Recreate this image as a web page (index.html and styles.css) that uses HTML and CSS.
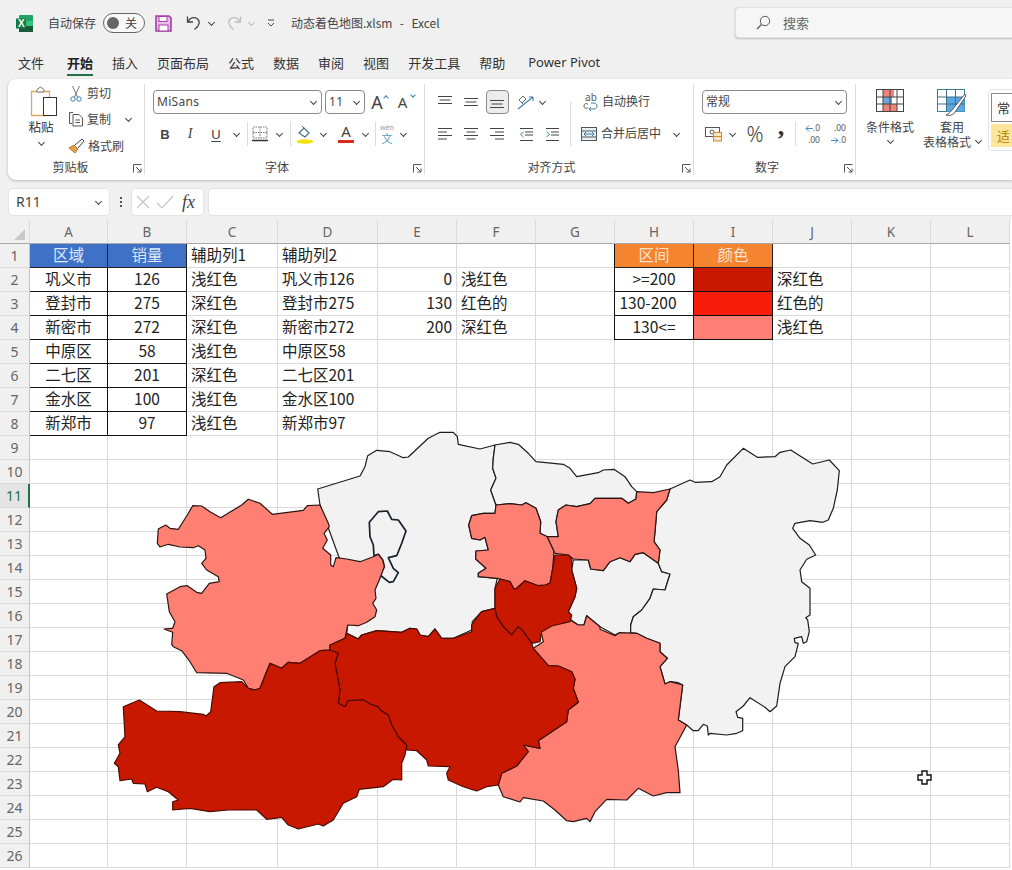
FILE: index.html
```html
<!DOCTYPE html>
<html lang="zh-CN">
<head>
<meta charset="utf-8">
<title>动态着色地图.xlsm - Excel</title>
<link rel="stylesheet" href="styles.css">
</head>
<body>
<div class="app">
  <svg class="defs" width="0" height="0">
    <symbol id="a-top" viewBox="0 0 16 16"><path d="M1 2.500h14M2.500 6h11M1 9.500h14"/></symbol>
    <symbol id="a-mid" viewBox="0 0 16 16"><path d="M1 4.500h14M2.500 8h11M1 11.500h14"/></symbol>
    <symbol id="a-bot" viewBox="0 0 16 16"><path d="M1 6.500h14M2.500 10h11M1 13.500h14"/></symbol>
    <symbol id="a-left" viewBox="0 0 16 16"><path d="M1 2.500h14M1 6h9M1 9.500h14M1 13h9"/></symbol>
    <symbol id="a-center" viewBox="0 0 16 16"><path d="M1 2.500h14M3.500 6h9M1 9.500h14M3.500 13h9"/></symbol>
    <symbol id="a-right" viewBox="0 0 16 16"><path d="M1 2.500h14M6 6h9M1 9.500h14M6 13h9"/></symbol>
    <symbol id="launch" viewBox="0 0 9 9"><path d="M.5 8.500v-8h8M3 3l5 5M8 4.500v3.500h-3.500" fill="none" stroke="#555"/></symbol>
  </svg>

  <header class="titlebar">
    <svg class="logo" width="17" height="17" viewBox="0 0 17 17"><rect x="3" width="14" height="17" rx="1" fill="#21a366"/><rect x="10" y="6" width="7" height="5" fill="#33c481"/><rect x="3" y="11" width="14" height="6" fill="#185c37"/><rect y="3.500" width="10" height="10" fill="#107c41"/><text x="2" y="12" class="logo-x">X</text></svg>
    <span class="autosave">自动保存</span>
    <span class="toggle"><i class="knob"></i><span>关</span></span>
    <svg class="save" width="17" height="17" viewBox="0 0 17 17"><path d="M1 1h13l2 2v13H1z" fill="#e9bfe6" stroke="#a43ea3" stroke-width="1.600"/><rect x="4" y="1.500" width="8" height="5" fill="#fff" stroke="#a43ea3"/><rect x="4" y="10" width="9" height="6" fill="#fff" stroke="#a43ea3"/></svg>
    <svg class="undo" width="16" height="16" viewBox="0 0 16 16"><path d="M1.500 1.500v5.500h5.500M1.700 6.800C4 3 8 1.500 11 3.500c3.500 2.500 3 7-2.500 11" fill="none" stroke="#444" stroke-width="1.300"/></svg>
    <i class="chev qat-c1"></i>
    <svg class="redo" width="16" height="16" viewBox="0 0 16 16"><path d="M14.500 1.500v5.500h-5.500M14.300 6.800C12 3 8 1.500 5 3.500c-3.500 2.500-3 7 2.500 11" fill="none" stroke="#bbb" stroke-width="1.300"/></svg>
    <i class="chev light qat-c2"></i>
    <svg class="qat" width="8" height="8" viewBox="0 0 8 8"><path d="M1 1h6M1 4l3 3 3-3" fill="none" stroke="#444"/></svg>
    <span class="doc">动态着色地图.xlsm  -  Excel</span>
    <div class="search">
      <svg width="15" height="15" viewBox="0 0 15 15"><circle cx="9" cy="6" r="4.700" fill="none" stroke="#555"/><path d="M5.500 9.500L1 14" stroke="#555" stroke-width="1.200"/></svg>
      <span>搜索</span>
    </div>
  </header>

  <nav class="tabs">
    <span>文件</span><span class="active">开始</span><span>插入</span><span>页面布局</span><span>公式</span><span>数据</span><span>审阅</span><span>视图</span><span>开发工具</span><span>帮助</span><span class="pp">Power Pivot</span>
  </nav>

  <section class="ribbon">
    <div class="group g-clip">
      <div class="body clip-body">
        <div class="paste">
          <svg width="28" height="32" viewBox="0 0 28 32"><path d="M1.500 5.500h18v24h-18z" fill="#fff" stroke="#d9a860" stroke-width="1.300"/><path d="M7 6V3.500l3.500-2.500 3.500 2.500V6z" fill="#fff" stroke="#777"/><rect x="13.500" y="11.500" width="13" height="18" fill="#fff" stroke="#333"/></svg>
          <span>粘贴</span>
          <i class="chev"></i>
        </div>
        <div class="clip-tools">
          <div class="ct"><svg width="16" height="17" viewBox="0 0 16 17"><path d="M4.500 1l5 11M11.500 1l-5 11" stroke="#777" fill="none"/><circle cx="5" cy="14" r="2.200" fill="none" stroke="#3a7fb5"/><circle cx="11" cy="14" r="2.200" fill="none" stroke="#3a7fb5"/></svg><span>剪切</span></div>
          <div class="ct"><svg width="16" height="16" viewBox="0 0 16 16"><path d="M5 1.500H1.500v11H4" fill="none" stroke="#555"/><path d="M5 3.500h6l3.500 3.500v8H5z" fill="#fff" stroke="#555"/><path d="M7.500 9h4.500M7.500 11.500h4.500" stroke="#555"/></svg><span>复制</span><i class="chev ct-chev"></i></div>
          <div class="ct"><svg width="17" height="16" viewBox="0 0 17 16"><path d="M1 10l5-3 4 4-3 4z" fill="#e6a24a" stroke="#b87a2a"/><path d="M7 7l7-6 2 2-6 7" fill="#fff" stroke="#444"/></svg><span>格式刷</span></div>
        </div>
      </div>
      <div class="label"><span>剪贴板</span><svg class="launch"><use href="#launch"/></svg></div>
    </div>

    <div class="group g-font">
      <div class="body">
        <div class="row">
          <div class="select w-font"><span>MiSans</span><i class="chev"></i></div>
          <i class="sp w3"></i>
          <div class="select w-size"><span>11</span><i class="chev"></i></div>
          <div class="tool w-26 big-a"><span>A</span><i class="up"></i></div>
          <div class="tool w-26 mid-a"><span>A</span><i class="down"></i></div>
        </div>
        <div class="row">
          <div class="tool w-24 gl bold">B</div>
          <div class="tool w-26 gl ital">I</div>
          <div class="tool w-26 gl und">U</div>
          <div class="tool w-14"><i class="chev"></i></div>
          <i class="sp w4"></i><i class="vsep"></i><i class="sp w4"></i>
          <div class="tool w-16"><svg width="16" height="16" viewBox="0 0 16 16"><path d="M1 1h14v11H1zM8 1v11M1 6.500h14" fill="none" stroke="#777" stroke-dasharray="1.500 1"/><path d="M0 14.500h16" stroke="#333" stroke-width="1.300"/></svg></div>
          <div class="tool w-22"><i class="chev"></i></div>
          <i class="vsep"></i><i class="sp w2"></i>
          <div class="tool w-24"><svg width="18" height="19" viewBox="0 0 18 19"><path d="M3 8l5-5 5 5-4 4z" fill="#fff" stroke="#3f6f85" stroke-width="1.200"/><path d="M6 1l2 2" stroke="#3f6f85"/><ellipse cx="9" cy="16.500" rx="8.500" ry="2.200" fill="#f4e300"/></svg></div>
          <div class="tool w-12"><i class="chev"></i></div>
          <i class="sp w8"></i>
          <div class="tool w-18 col-a"><span>A</span><i class="bar"></i></div>
          <div class="tool w-20"><i class="chev"></i></div>
          <i class="vsep"></i>
          <div class="tool w-22 wen"><span class="py">wén</span><span class="zi">文</span></div>
          <div class="tool w-10"><i class="chev"></i></div>
        </div>
      </div>
      <div class="label"><span>字体</span><svg class="launch"><use href="#launch"/></svg></div>
    </div>

    <div class="group g-align">
      <div class="body">
        <div class="row">
          <div class="tool w-26"><svg class="ln"><use href="#a-top"/></svg></div>
          <div class="tool w-26"><svg class="ln"><use href="#a-mid"/></svg></div>
          <div class="tool w-26 pressed"><svg class="ln"><use href="#a-bot"/></svg></div>
          <i class="sp w6"></i>
          <div class="tool w-20"><svg width="18" height="16" viewBox="0 0 18 16"><path d="M1 15L16 3M16 3h-4M16 3v4" fill="none" stroke="#3f7fa8" stroke-width="1.100"/><path d="M2 6l4-4 3 3-4 4zM7 11l-2-2" fill="none" stroke="#666"/></svg></div>
          <div class="tool w-12"><i class="chev"></i></div>
          <i class="sp w22"></i><i class="vsep tall"></i><i class="sp w12"></i>
          <div class="tool w-16 wrap-ic"><span class="ab">ab</span><svg width="16" height="10" viewBox="0 0 16 10"><path d="M8 1h3c4 0 4 6 0 6H6M8 5L6 7l2 2" fill="none" stroke="#3f7fa8"/><path d="M5 2.500C3 .5 1 2 1 4s2 3.500 4 1.500" fill="none" stroke="#555"/></svg></div>
          <span class="tx ml3">自动换行</span>
        </div>
        <div class="row">
          <div class="tool w-26"><svg class="ln"><use href="#a-left"/></svg></div>
          <div class="tool w-26"><svg class="ln"><use href="#a-center"/></svg></div>
          <div class="tool w-26"><svg class="ln"><use href="#a-right"/></svg></div>
          <i class="sp w3"></i>
          <div class="tool w-26"><svg width="15" height="15" viewBox="0 0 15 15"><path d="M1 1.500h13M6 5h8M6 8h8M1 13.500h13" stroke="#444" fill="none"/><path d="M4.500 5L1.500 7.500l3 2.500" stroke="#3f7fa8" fill="none"/></svg></div>
          <div class="tool w-26"><svg width="15" height="15" viewBox="0 0 15 15"><path d="M1 1.500h13M6 5h8M6 8h8M1 13.500h13" stroke="#444" fill="none"/><path d="M1.500 5l3 2.500-3 2.500" stroke="#3f7fa8" fill="none"/></svg></div>
          <i class="sp w5"></i><i class="vsep"></i><i class="sp w10"></i>
          <div class="tool w-16"><svg width="16" height="16" viewBox="0 0 16 16"><rect x=".5" y="1.500" width="15" height="13" fill="#e8f2f6" stroke="#555"/><path d="M.5 5h15M.5 11h15" stroke="#555"/><path d="M3 8h10M5 6l-2 2 2 2M11 6l2 2-2 2" stroke="#3f7fa8" fill="none"/></svg></div>
          <span class="tx ml4">合并后居中</span>
          <i class="sp w9"></i>
          <div class="tool w-12"><i class="chev"></i></div>
        </div>
      </div>
      <div class="label"><span>对齐方式</span><svg class="launch"><use href="#launch"/></svg></div>
    </div>

    <div class="group g-num">
      <div class="body">
        <div class="row">
          <div class="select w-num"><span class="cn">常规</span><i class="chev"></i></div>
        </div>
        <div class="row">
          <div class="tool w-24"><svg width="18" height="16" viewBox="0 0 18 16"><rect x=".5" y="1.500" width="14" height="9" fill="#fff" stroke="#555"/><circle cx="7" cy="6" r="2" fill="none" stroke="#555"/><rect x="8.500" y="6.500" width="8" height="8.500" fill="#fde3bf" stroke="#d6892e"/><path d="M8.500 10.500h8" stroke="#d6892e"/></svg></div>
          <div class="tool w-12"><i class="chev"></i></div>
          <i class="sp w5"></i>
          <div class="tool w-24 pct">%</div>
          <i class="sp w2"></i>
          <div class="tool w-24 cma">,</div>
          <i class="sp w2"></i><i class="vsep"></i><i class="sp w1"></i>
          <div class="tool w-26 dec"><span><svg class="dec-ar" width="8" height="7" viewBox="0 0 8 7"><path d="M8 3.500H1M4 .5l-3 3 3 3" fill="none" stroke="#3f8fc4"/></svg>.0</span><span>.00</span></div>
          <div class="tool w-26 dec"><span>.00</span><span><svg class="dec-ar" width="8" height="7" viewBox="0 0 8 7"><path d="M0 3.500h7M4 .5l3 3-3 3" fill="none" stroke="#3f8fc4"/></svg>.0</span></div>
        </div>
      </div>
      <div class="label"><span>数字</span><svg class="launch"><use href="#launch"/></svg></div>
    </div>

    <div class="g-style">
      <div class="big w-cf">
        <svg width="28" height="23" viewBox="0 0 28 23"><rect x=".5" y=".5" width="27" height="22" fill="#fff" stroke="#444"/><path d="M7 1h11v7H7z" fill="#f08378"/><path d="M7 8h9v7H7z" fill="#6fa6de"/><path d="M7 15h14v7H7z" fill="#f08378"/><path d="M7 .5v22M14 .5v22M21 .5v22M.5 8h27M.5 15h27" stroke="#444" fill="none"/></svg>
        <span>条件格式</span><i class="chev"></i>
      </div>
      <div class="big w-tf">
        <svg width="30" height="28" viewBox="0 0 30 28"><rect x=".5" y=".5" width="27" height="22" fill="#fff" stroke="#3f7f8f"/><rect x="9.500" y="8" width="18" height="14.500" fill="#5aa7e8"/><path d="M9.500 .5v22M18.500 .5v22M.5 8h27M.5 15h27" stroke="#3f6f7f" fill="none"/><path d="M28 5L15 21c-1 1-3 4-6 5 3 1 8 0 9-3L29 7z" fill="#fff" stroke="#555"/></svg>
        <span>套用</span><span class="l2">表格格式<i class="chev"></i></span>
      </div>
      <div class="cells">
        <div class="normal">常</div>
        <div class="good">适</div>
      </div>
    </div>
  </section>

  <div class="formula">
    <div class="namebox"><span>R11</span><i class="chev"></i></div>
    <div class="dots"><i></i><i></i><i></i></div>
    <div class="fxbox">
      <svg width="14" height="14" viewBox="0 0 14 14"><path d="M1 1l12 12M13 1L1 13" stroke="#c4c4c4" stroke-width="1.200"/></svg>
      <svg width="18" height="14" viewBox="0 0 18 14"><path d="M1 8l5 5L17 1" fill="none" stroke="#c4c4c4" stroke-width="1.200"/></svg>
      <span class="fx">fx</span>
    </div>
    <div class="finput"></div>
  </div>

  <div class="sheet">
    <table class="grid">
      <colgroup><col class="c-h"><col class="c-a"><col class="c-b"><col class="c-c"><col class="c-d"><col class="c-n"><col class="c-n"><col class="c-n"><col class="c-n"><col class="c-n"><col class="c-n"><col class="c-n"><col class="c-n"></colgroup>
      <tr class="heads"><th class="corner"><i></i></th><th>A</th><th>B</th><th>C</th><th>D</th><th>E</th><th>F</th><th>G</th><th>H</th><th>I</th><th>J</th><th>K</th><th>L</th></tr>
      <tr><th>1</th><td class="blue">区域</td><td class="blue">销量</td><td>辅助列1</td><td>辅助列2</td><td></td><td></td><td></td><td class="orange">区间</td><td class="orange">颜色</td><td></td><td></td><td></td></tr>
      <tr><th>2</th><td class="box">巩义市</td><td class="box">126</td><td>浅红色</td><td>巩义市126</td><td class="num">0</td><td>浅红色</td><td></td><td class="box">&gt;=200</td><td class="box deep"></td><td>深红色</td><td></td><td></td></tr>
      <tr><th>3</th><td class="box">登封市</td><td class="box">275</td><td>深红色</td><td>登封市275</td><td class="num">130</td><td>红色的</td><td></td><td class="box tight">130-200</td><td class="box red"></td><td>红色的</td><td></td><td></td></tr>
      <tr><th>4</th><td class="box">新密市</td><td class="box">272</td><td>深红色</td><td>新密市272</td><td class="num">200</td><td>深红色</td><td></td><td class="box">130&lt;=</td><td class="box pale"></td><td>浅红色</td><td></td><td></td></tr>
      <tr><th>5</th><td class="box">中原区</td><td class="box">58</td><td>浅红色</td><td>中原区58</td><td></td><td></td><td></td><td></td><td></td><td></td><td></td><td></td></tr>
      <tr><th>6</th><td class="box">二七区</td><td class="box">201</td><td>深红色</td><td>二七区201</td><td></td><td></td><td></td><td></td><td></td><td></td><td></td><td></td></tr>
      <tr><th>7</th><td class="box">金水区</td><td class="box">100</td><td>浅红色</td><td>金水区100</td><td></td><td></td><td></td><td></td><td></td><td></td><td></td><td></td></tr>
      <tr><th>8</th><td class="box">新郑市</td><td class="box">97</td><td>浅红色</td><td>新郑市97</td><td></td><td></td><td></td><td></td><td></td><td></td><td></td><td></td></tr>
      <tr><th>9</th><td></td><td></td><td></td><td></td><td></td><td></td><td></td><td></td><td></td><td></td><td></td><td></td></tr>
      <tr><th>10</th><td></td><td></td><td></td><td></td><td></td><td></td><td></td><td></td><td></td><td></td><td></td><td></td></tr>
      <tr><th class="sel">11</th><td></td><td></td><td></td><td></td><td></td><td></td><td></td><td></td><td></td><td></td><td></td><td></td></tr>
      <tr><th>12</th><td></td><td></td><td></td><td></td><td></td><td></td><td></td><td></td><td></td><td></td><td></td><td></td></tr>
      <tr><th>13</th><td></td><td></td><td></td><td></td><td></td><td></td><td></td><td></td><td></td><td></td><td></td><td></td></tr>
      <tr><th>14</th><td></td><td></td><td></td><td></td><td></td><td></td><td></td><td></td><td></td><td></td><td></td><td></td></tr>
      <tr><th>15</th><td></td><td></td><td></td><td></td><td></td><td></td><td></td><td></td><td></td><td></td><td></td><td></td></tr>
      <tr><th>16</th><td></td><td></td><td></td><td></td><td></td><td></td><td></td><td></td><td></td><td></td><td></td><td></td></tr>
      <tr><th>17</th><td></td><td></td><td></td><td></td><td></td><td></td><td></td><td></td><td></td><td></td><td></td><td></td></tr>
      <tr><th>18</th><td></td><td></td><td></td><td></td><td></td><td></td><td></td><td></td><td></td><td></td><td></td><td></td></tr>
      <tr><th>19</th><td></td><td></td><td></td><td></td><td></td><td></td><td></td><td></td><td></td><td></td><td></td><td></td></tr>
      <tr><th>20</th><td></td><td></td><td></td><td></td><td></td><td></td><td></td><td></td><td></td><td></td><td></td><td></td></tr>
      <tr><th>21</th><td></td><td></td><td></td><td></td><td></td><td></td><td></td><td></td><td></td><td></td><td></td><td></td></tr>
      <tr><th>22</th><td></td><td></td><td></td><td></td><td></td><td></td><td></td><td></td><td></td><td></td><td></td><td></td></tr>
      <tr><th>23</th><td></td><td></td><td></td><td></td><td></td><td></td><td></td><td></td><td></td><td></td><td></td><td></td></tr>
      <tr><th>24</th><td></td><td></td><td></td><td></td><td></td><td></td><td></td><td></td><td></td><td></td><td></td><td></td></tr>
      <tr><th>25</th><td></td><td></td><td></td><td></td><td></td><td></td><td></td><td></td><td></td><td></td><td></td><td></td></tr>
      <tr><th>26</th><td></td><td></td><td></td><td></td><td></td><td></td><td></td><td></td><td></td><td></td><td></td><td></td></tr>
    </table>

    <svg class="map" width="1012" height="650" viewBox="0 220 1012 650">
      <g class="gray">
        <polygon points="317.700,489 360,476 365,466.700 367.700,455.700 376.700,450.300 390,451.700 403.300,457.700 408.300,457 428.300,438.300 440,432.300 453.300,432.300 457.300,436.700 458.300,444.300 480,449 495,445 493.300,458.300 492.700,468.300 496,478.300 490.700,490 496,505 495,513.300 483.300,513.300 471.700,515.700 468.700,525 471.700,538.300 480,540 485,537.300 488.300,550 476,551 475.700,559 486,568.300 478.300,573.300 478.300,576.700 497.300,578.300 495,588.300 495,608.300 481.700,611.700 472.300,621.700 471.700,630 453.300,638.300 441.700,638.300 435,629 428.300,636.700 420,635 416.700,629 410,628.300 401.700,632.300 376.700,630.700 361.700,635 358.300,639 346.700,633.300 347.700,625 340,560 320,505"/>
        <polygon class="enclave" points="369.300,522.300 378.300,511.700 387.300,511 391.700,519.300 398.300,520 406,531 401.700,543.300 396.700,555.700 388.300,557.700 393.300,568.300 398.300,572.700 393.300,581.700 389.300,582.300 380,575 384.300,566.700 382.700,560 378.300,554.300 374,555.700 373.300,545 370,536.700"/>
        <polygon points="495,445 510,442.300 518.300,444.300 528.300,453.300 536,461.700 563.300,464.300 570,468.300 576.700,476.700 598.300,472.700 603.300,470 614,469.300 625,476.700 631.700,486.700 636.700,491.700 636,499 628.300,503.300 621.700,498.300 595,498.300 590,503.700 576.700,506.700 566,505 558.300,510 556,521.700 558.300,536.700 547.300,536.700 540,533.300 540.700,521.700 536,508.300 526,502.700 521.700,505 510,503.700 496,505 490.700,490 496,478.300 492.700,468.300 493.300,458.300"/>
        <polygon points="573.300,560 588.300,560 590.700,569 603.300,570.700 610,561.700 620,557.700 630,561.700 635,554.300 643.300,552.700 658.300,563.300 661.700,571.700 670,574 665,590 653.300,589 650,598.300 641.700,610 633.300,616.700 630.700,625 630.700,633 618.300,633.300 615,635 600,626.700 586.700,615.700 584,625 578.300,625 571,620 568.300,611.700 575,596.700 576.700,588.300 571.700,570"/>
        <polygon points="670,489 690,480 695,482.300 711.700,481.700 720,476.700 726.700,465 743.300,448.300 757.300,457.300 775,456.700 780,452.300 790.700,450 812.700,464 829.300,460 839.300,470.700 837.300,490 833.300,508.300 828.300,520 822.700,522.300 810,520.700 795,523.300 792.700,528.300 800,538.300 809.300,545 815.700,555 806.700,559.300 800,570 801.700,581.700 810,588.300 810,615 805.700,617.700 807.700,620 809.300,631.700 806.700,641.700 803.300,643.300 801.700,636.700 794.300,638.300 795,642.700 798.300,643.300 795,656.700 785,666.700 780,683.300 776.700,706 770,711.700 765,707.300 750,697.700 743.300,706 736,711.700 737.700,717.300 742.700,718.300 742.700,730.700 736.700,733.300 726.700,735 710,733.300 708.300,735 707.300,726 703.300,724.300 698.300,730.700 693.300,730.700 686.700,725 678.300,720 682.700,685 678.300,682.700 670,681.700 665,684 660,666.700 667.300,658.300 660,651.700 660,643.300 646.700,638.300 636.700,633.300 630.700,632.700 630.700,625 633.300,616.700 641.700,610 650,598.300 653.300,589 665,590 670,574 661.700,571.700 658.300,563.300 660,550 654,541.700 655,531.700 656.700,511.700 666.700,500"/>
      </g>
      <g class="pale-r">
        <polygon points="320,505 307.300,505.700 303.300,510.300 272.300,514.300 260,503.300 248.300,499.300 241.700,505 220.700,517.700 210,511.700 201.700,506 192.700,505.700 187.300,515 178.300,529.300 170,528.300 165.700,525 158.300,529 157.300,543.300 160,547 168.300,544.300 180,547 193.300,547.700 198.300,545.700 205,550 206,558.300 201.700,563.300 206.700,570 218.300,576.700 219.300,581.700 209.300,583.300 201.700,593.300 196.700,592.300 187.300,585.700 180,586.700 166.700,594 169.300,611.700 175,621.700 172.700,628.300 164,629 172.700,632.300 171.700,644.300 173.300,646.700 181.700,650.700 190,661.700 196.700,672.700 226.700,673.300 243.300,680 248.300,688.300 255,690 260,688.300 270,663.300 281.700,668.300 288.300,662.300 300,663.300 320,650.700 330,650 330,645 345,638.300 347.700,625 358.300,625.700 366.700,622.300 375,616.700 376.700,610 372.700,603.300 376,598.300 375,590 379.300,580 384.300,566.700 382.700,560 378.300,554.300 373.300,556.700 360,561.700 346.700,559 336,557.700 333.300,566.700 330.700,565 330.700,555 322.700,548.300 327.300,540 324,533.300 329.300,526.700 328.300,523.300"/>
        <polygon points="496,505 510,503.700 521.700,505 526,502.700 536,508.300 540.700,521.700 540,533.300 547.300,536.700 554,551 552.700,568.300 550,583.300 545,585 538.300,585.700 525,580.700 516.700,588.300 514,589 510,581.700 500,579 497.300,578.300 478.300,576.700 478.300,573.300 486,568.300 475.700,559 476,551 488.300,550 485,537.300 480,540 471.700,538.300 468.700,525 471.700,515.700 483.300,513.300 495,513.300"/>
        <polygon points="636.700,491.700 653.300,492.700 670,489 666.700,500 656.700,511.700 655,531.700 654,541.700 660,550 658.300,563.300 643.300,552.700 635,554.300 630,561.700 620,557.700 610,561.700 603.300,570.700 590.700,569 588.300,560 573.300,559 568.300,555 555,553.300 547.300,536.700 558.300,536.700 556,521.700 558.300,510 566,505 576.700,506.700 590,503.700 595,498.300 621.700,498.300 628.300,503.300 636,499"/>
        <polygon points="586.700,615.700 600,626.700 600,629.300 615,635.700 619.300,632.700 636.700,633.300 646.700,638.300 660,643.300 660,651.700 667.300,658.300 660,666.700 665,684 670,681.700 682.700,685 678.300,720 686.700,725 675,746.700 678.300,770 680,792.700 666.700,792.700 653.300,796 638.300,788.300 626.700,800 606.700,799.300 595,811.700 590,821.700 586.700,818.300 573.300,821.700 566.700,820.700 555,810 543.300,801 523.300,797.700 520,802 503.300,796.700 498.300,785 501.700,773.300 516.700,766 528.300,751.700 523.300,745 540,748.300 538.300,740.700 566.700,721.700 568.300,710 578.300,702.300 573.300,688.300 575,679.300 571.700,671.700 558.300,666 548.300,665.700 533.300,648.300 543.300,641.700 541,631.700 551.700,624 570,620 578.300,625 584,625"/>
      </g>
      <g class="deep-r">
        <polygon points="555,555 568.300,555 571.700,559.300 571.700,570 576.700,588.300 575,596.700 568.300,611.700 571.700,615 570,621.700 551.700,626 541.700,631.700 540,641.700 531.700,643.300 523.300,631.700 518.300,626.700 511.700,635 503.300,626.700 496.700,616.700 495,608.300 495,588.300 500,579 510,581.700 514,589 516.700,588.300 525,580.700 538.300,585.700 545,585 550,583.300 552.700,568.300"/>
        <polygon points="330,645 345,638.300 346.700,633.300 358.300,639 361.700,635 376.700,630.700 401.700,632.300 410,628.300 416.700,629 420,635 428.300,636.700 435,629 441.700,638.300 453.300,638.300 471.700,631.700 471.700,625 480,613.300 481.700,611.700 495,608.300 496.700,616.700 503.300,626.700 511.700,635 518.300,626.700 523.300,631.700 531.700,643.300 533.300,648.300 548.300,665.700 558.300,666 571.700,671.700 575,679.300 573.300,688.300 578.300,702.300 568.300,710 566.700,721.700 538.300,740.700 540,748.300 523.300,745 528.300,751.700 516.700,766 501.700,773.300 498.300,785 486.700,786.700 476.700,791 463.300,786.700 448.300,780 446.700,773.300 450,766.700 428.300,766 426.700,760 416.700,750.700 406.700,750 406.700,745 398.300,736.700 391.700,725 388.300,715 380,710 378.300,706.700 370,704 363.300,700 348.300,700.700 345,706.700 338.300,703.300 340,690 335,663.300 338.300,653.300 330,650"/>
        <polygon points="320,650.700 330,650 338.300,653.300 335,663.300 340,690 338.300,703.300 345,706.700 348.300,700.700 363.300,700 370,704 378.300,706.700 380,710 388.300,715 391.700,725 398.300,736.700 406.700,745 405,755 401.700,763.300 401.700,780 393.300,779.300 383.300,786.700 359.300,789.300 356.700,796.700 343.300,803.300 333.300,820 323.300,826 318.300,824 298.300,829 288.300,825 281.700,817.300 266.700,819.300 256.700,810 228.300,810 210,811.700 190,808.300 172.700,810 172.700,801.700 178.300,800 168.300,791.700 156.700,787.300 147.300,791.700 145,784 133.300,783.300 131.700,779 120,780.700 118.300,766.700 114.300,763.300 120,753.300 118.300,745 125,736.700 123.300,706.700 139.300,700 156.700,711 180,711.700 203.300,714.300 206,716 210.700,711.700 214,686.700 220,682.700 241.700,681.700 248.300,688.300 255,690 260,688.300 270,663.300 281.700,668.300 288.300,662.300 300,663.300"/>
      </g>
    </svg>

    <svg class="cursor" width="15" height="15" viewBox="0 0 15 15"><path d="M5 1h5v4h4v5h-4v4H5v-4H1V5h4z" fill="#fff" stroke="#111" stroke-width="1.400"/></svg>
  </div>
</div>
</body>
</html>
```

FILE: styles.css
```css
* { box-sizing: border-box; }
html, body { margin: 0; padding: 0; }
body { background: #f0f0f0; overflow: hidden; }
.app {
  width: 1012px; height: 870px; overflow: hidden; background: #f0f0f0; color: #333;
  font-family: "Noto Sans CJK SC", "Noto Sans", sans-serif; font-size: 12px;
}
.defs { display: block; position: absolute; }
.chev { display: inline-block; width: 5px; height: 5px; border-right: 1.200px solid #444; border-bottom: 1.200px solid #444; transform: translateY(-1px) rotate(45deg); flex: none; }
.chev.light { border-color: #bbb; }

/* title bar */
.titlebar { height: 46px; display: flex; align-items: center; padding-left: 16px; }
.logo-x { font: bold 10px "Liberation Sans", sans-serif; fill: #fff; }
.logo { margin-top: 1px; }
.autosave { margin-left: 15px; font-size: 12px; line-height: 16px; color: #444; }
.toggle { margin-left: 7px; width: 42px; height: 20px; border: 1.200px solid #666; border-radius: 10px; display: flex; align-items: center; background: #f8f8f8; padding-left: 3px; }
.knob { width: 12px; height: 12px; border-radius: 50%; background: #666; }
.toggle span { margin-left: 6px; font-size: 12px; line-height: 16px; color: #444; }
.save { margin-left: 10px; }
.undo { margin-left: 14px; }
.qat-c1 { margin-left: 7px; }
.redo { margin-left: 12px; }
.qat-c2 { margin-left: 7px; }
.qat { margin-left: 13px; }
.doc { margin-left: 16px; color: #444; white-space: pre; word-spacing: 1px; font-size: 12px; line-height: 16px; width: 161px; }
.search { margin-left: 283px; margin-right: -20px; flex: 1; height: 31px; margin-top: -1px; background: #f6f6f6; border: 1px solid #e2e2e2; border-radius: 4px; box-shadow: 0 1px 2px #bbb; display: flex; align-items: center; padding-left: 20px; gap: 12px; color: #666; font-size: 13px; }

/* tabs */
.tabs { height: 33px; display: flex; align-items: flex-start; padding: 7px 0 0 18px; gap: 19px; font-size: 13px; line-height: 19px; color: #333; }
.tabs span { position: relative; height: 23px; }
.tabs .active { font-weight: 700; color: #222; border-bottom: 2px solid #217346; margin-left: 4px; }
.tabs .pp { font-family: "Noto Sans", sans-serif; margin-left: 4px; }

/* ribbon */
.ribbon { height: 101px; margin-left: 8px; background: #fff; border-radius: 8px 0 0 8px; box-shadow: 0 1px 3px #b8b8b8; display: flex; overflow: hidden; }
.group { display: flex; flex-direction: column; flex: none; position: relative; }
.group::after { content: ""; position: absolute; right: 0; top: 5px; bottom: 5px; width: 1px; background: #dcdcdc; }
.g-clip { width: 137px; }
.g-font { width: 280px; }
.g-align { width: 269px; }
.g-num { width: 162px; }
.body { height: 80px; padding: 11px 0 0 8px; display: flex; flex-direction: column; gap: 8px; }
.g-align .body { padding-left: 7px; }
.g-num .body { padding-left: 8px; }
.row { height: 24px; display: flex; align-items: center; }
.label { height: 18px; text-align: center; font-size: 12px; line-height: 16px; color: #444; position: relative; padding-right: 16px; }
.g-clip .label { padding-right: 12px; }
.launch { position: absolute; right: 3px; top: 5px; width: 9px; height: 9px; }
.clip-body { flex-direction: row; padding: 0 0 0 6px; gap: 0; }
.paste { width: 54px; display: flex; flex-direction: column; align-items: center; padding-top: 7px; font-size: 12.500px; line-height: 17px; color: #333; }
.paste svg { margin-left: 5px; }
.paste .chev { margin-top: 6px; }
.clip-tools { padding-top: 1px; display: flex; flex-direction: column; }
.ct { height: 26.500px; display: flex; align-items: center; gap: 3px; color: #444; line-height: 16px; }
.ct svg { flex: none; }
.ct-chev { margin-left: 12px; }
.select { height: 24px; border: 1px solid #8a8a8a; border-radius: 4px; display: flex; align-items: center; justify-content: space-between; padding: 0 5px 0 3px; background: #fff; font-family: "Noto Sans", sans-serif; font-size: 12px; letter-spacing: .3px; color: #444; line-height: 16px; }
.select .cn { font-family: "Noto Sans CJK SC", sans-serif; letter-spacing: 0; margin-top: -2px; }
.w-font { width: 169px; }
.w-size { width: 40px; }
.w-num { width: 145px; }
.sp { flex: none; display: block; }
.w1 { width: 1px; } .w2 { width: 2px; } .w3 { width: 3px; } .w4 { width: 4px; } .w5 { width: 5px; } .w6 { width: 6px; }
.w8 { width: 8px; } .w9 { width: 9px; } .w10 { width: 10px; } .w12 { width: 12px; } .w22 { width: 22px; }
.vsep { flex: none; width: 1px; height: 24px; background: #dcdcdc; }
.vsep.tall { height: 32px; margin-top: 32px; }
.tool { height: 24px; display: flex; align-items: center; justify-content: center; flex: none; position: relative; color: #444; }
.w-10 { width: 10px; } .w-12 { width: 12px; } .w-14 { width: 14px; } .w-16 { width: 16px; } .w-18 { width: 18px; }
.w-20 { width: 20px; } .w-22 { width: 22px; } .w-24 { width: 24px; } .w-26 { width: 26px; }
.gl { font-family: "Liberation Sans", sans-serif; font-size: 13px; }
.bold { font-weight: 700; }
.ital { font-family: "Liberation Serif", serif; font-style: italic; font-size: 14px; }
.und { text-decoration: underline; text-underline-offset: 2px; }
.big-a span { font: 18px "Noto Sans", sans-serif; line-height: 24px; margin-left: -2px; }
.mid-a span { font: 15px "Noto Sans", sans-serif; line-height: 24px; margin-left: -3px; }
.up, .down { position: absolute; right: 3px; top: 6px; width: 4px; height: 4px; border-left: 1px solid #3f7fa8; border-top: 1px solid #3f7fa8; transform: rotate(45deg); }
.down { transform: rotate(225deg); right: 2px; top: 3px; }
.col-a { flex-direction: column; justify-content: flex-start; }
.col-a span { font: 15px/18px "Noto Sans", sans-serif; }
.bar { width: 16px; height: 3px; background: #d9281e; display: block; margin-top: 0; }
.wen { flex-direction: column; line-height: 9px; }
.py { font-size: 7px; color: #999; line-height: 8px; font-family: "Noto Sans", sans-serif; }
.zi { font-size: 11px; color: #5a9ac2; line-height: 12px; }
.ln { width: 16px; height: 16px; fill: none; stroke: #444; stroke-width: 1; }
.pressed::before { content: ""; position: absolute; left: 2px; right: 1px; top: 0; bottom: 0; background: #ececec; border: 1px solid #8a8a8a; border-radius: 4px; }
.pressed svg { position: relative; }
.wrap-ic { flex-direction: column; }
.ab { font: 10px/9px "Noto Sans", sans-serif; color: #555; }
.tx { font-size: 12px; line-height: 16px; color: #444; white-space: nowrap; margin-top: -2px; }
.ml3 { margin-left: 3px; }
.ml4 { margin-left: 4px; }
.pct { font: 300 21px/24px "Noto Sans", sans-serif; }
.cma { font: 700 26px/10px "Liberation Serif", serif; align-items: flex-start; color: #333; }
.dec { flex-direction: column; align-items: flex-end; padding-right: 3px; font: 8.500px/12px "Noto Sans", sans-serif; color: #555; }
.dec span { display: flex; align-items: center; }
.dec-ar { flex: none; }

.g-style { display: flex; flex: 1; }
.big { display: flex; flex-direction: column; align-items: center; font-size: 12px; line-height: 15px; color: #444; flex: none; padding-top: 10px; white-space: nowrap; }
.w-cf { width: 62px; margin-left: 3px; }
.w-cf span { margin-top: 7px; }
.w-cf .chev { margin-top: 5px; }
.w-tf { width: 62px; }
.w-tf span:first-of-type { margin-top: 2px; }
.l2 { display: flex; align-items: center; gap: 5px; }
.cells { margin: 10px 0 0 5px; width: 40px; border: 1px solid #e2e2e2; border-radius: 4px; padding: 3px 0 0 2px; height: 62px; font-size: 13px; line-height: 28px; flex: none; }
.normal { height: 29px; border: 1px solid #888; padding-left: 5px; color: #333; }
.good { height: 23px; margin-top: 2px; background: #ffe699; padding-left: 6px; color: #b58100; line-height: 23px; }

/* formula bar */
.formula { height: 28px; margin: 8px 0 4px 8px; display: flex; }
.namebox { width: 102px; background: #fff; border-radius: 4px; border: 1px solid #e4e4e4; display: flex; align-items: center; justify-content: space-between; padding: 0 8px 0 7px; font: 14px/18px "Noto Sans", sans-serif; color: #444; }
.dots { width: 21px; display: flex; flex-direction: column; align-items: center; justify-content: center; gap: 2px; }
.dots i { width: 2px; height: 2px; background: #555; }
.fxbox { width: 73px; background: #fff; border-radius: 4px; border: 1px solid #e4e4e4; display: flex; align-items: center; padding-left: 4px; gap: 6px; margin-right: 4px; }
.fx { font: italic 18px/20px "Liberation Serif", serif; color: #444; margin-left: 2px; }
.finput { flex: 1; background: #fff; border-radius: 4px 0 0 4px; border: 1px solid #e4e4e4; border-right: 0; }

/* sheet */
.sheet { position: relative; height: 650px; background: #fff; }
.grid { border-collapse: separate; border-spacing: 0; table-layout: fixed; width: 1010px; font-size: 15.500px; color: #222; }
.c-h { width: 30px; } .c-a { width: 78px; } .c-b { width: 79px; } .c-c { width: 91px; } .c-d { width: 100px; } .c-n { width: 79px; }
.grid tr { height: 24px; }
.grid td { height: 24px; padding: 0 0 3px 4px; border-right: 1px solid #dadada; border-bottom: 1px solid #dadada; white-space: nowrap; overflow: visible; line-height: 20px; background: #fff; }
.grid th { height: 24px; padding: 0; font-weight: 400; background: #f0f0f0; color: #666; font: 14px/22px "Noto Sans", sans-serif; border-right: 1px solid #c4c4c4; border-bottom: 1px solid #dadada; }
.heads th { background: #f0f0f0; color: #666; border-right: 1px solid #dadada; border-bottom: 1px solid #a8a8a8; font-size: 13.500px; }
.corner { position: relative; }
.corner i { position: absolute; right: 4px; bottom: 3px; border-left: 11px solid transparent; border-bottom: 11px solid #c9c9c9; }
.grid .sel { border-right: 2px solid #217346; color: #217346; background: #e4e4e4; }
.grid .blue { background: #3f72c7; color: #dfe8f6; text-align: center; padding: 0 0 3px; border-right: 1px solid #222; border-bottom: 1px solid #222; }
.grid .orange { background: #f58431; color: #fbe3cf; text-align: center; padding: 0 0 3px; border-right: 1px solid #222; border-bottom-color: #222; }
.grid .box { text-align: center; padding: 0 0 3px; border-right: 1px solid #111; border-bottom: 1px solid #111; }
.grid .tight { padding-right: 12px; }
.grid .num { text-align: right; padding: 0 4px 3px 0; }
.grid .deep { background: #c91800; }
.grid .red { background: #f81d0a; }
.grid .pale { background: #ff7f75; }
.grid tr > td.box:nth-child(9), .grid tr > td.orange:nth-child(9) { box-shadow: -1px 0 0 #111; }
.map { position: absolute; left: 0; top: 0; }
.map polygon { stroke-width: 1.200; stroke-linejoin: round; }
.gray polygon { fill: #f2f2f2; stroke: #1c1c1c; }
.gray .enclave { stroke: #16202e; stroke-width: 1.700; }
.pale-r polygon { fill: #ff8073; stroke: #2a1512; }
.deep-r polygon { fill: #c91800; stroke: #4a0b03; }
.cursor { position: absolute; left: 917px; top: 550px; }
```
